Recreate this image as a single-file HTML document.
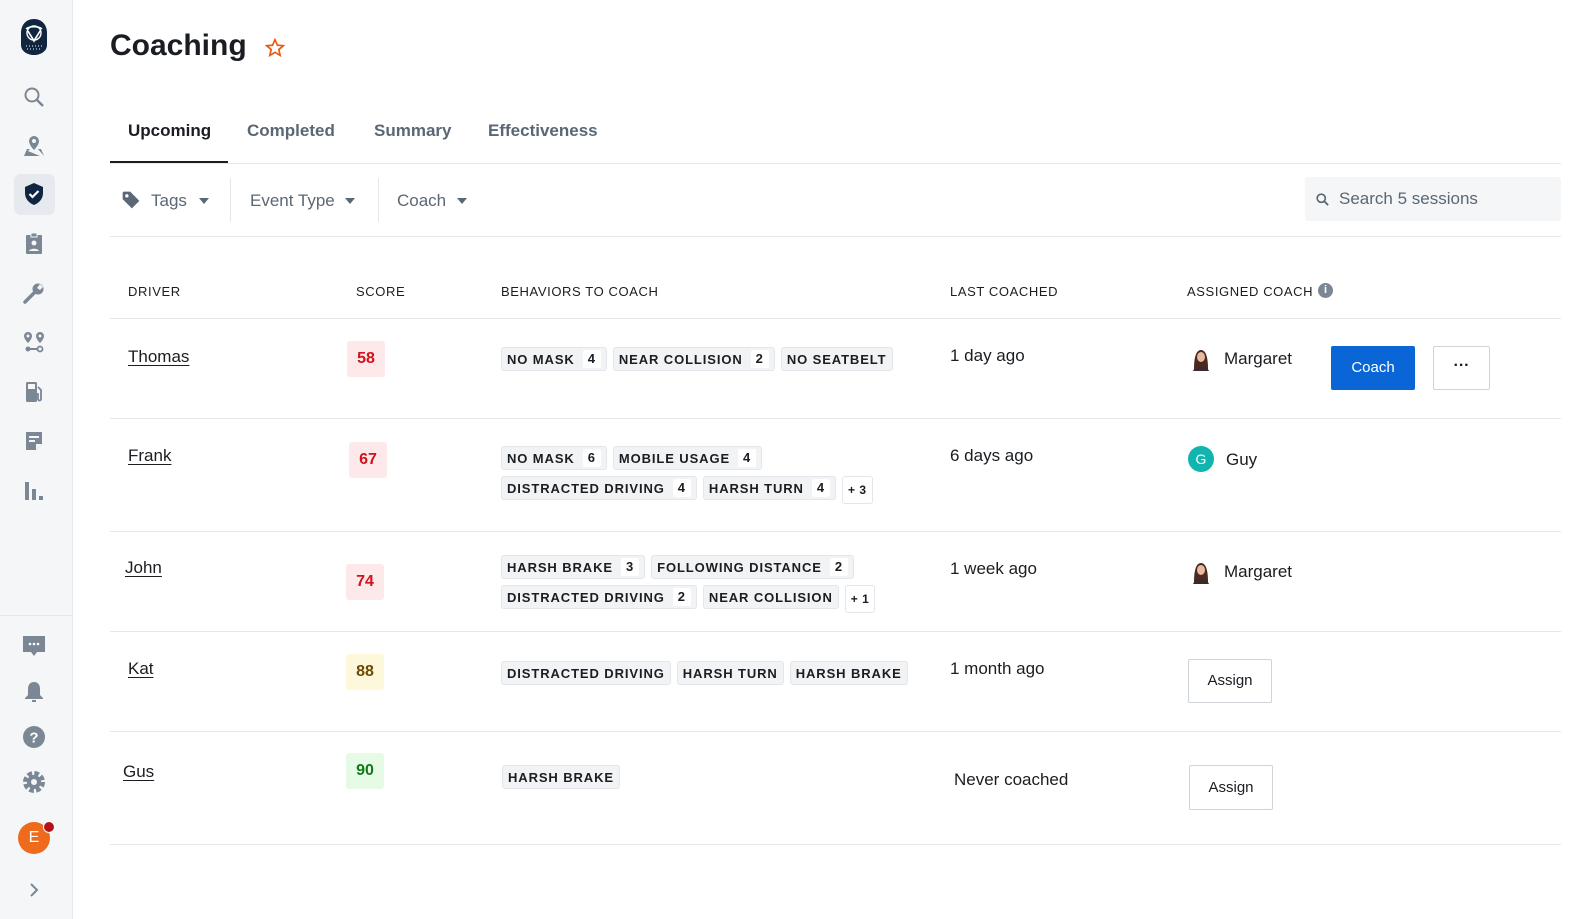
<!DOCTYPE html>
<html><head><meta charset="utf-8"><style>
*{box-sizing:border-box;margin:0;padding:0}
body{width:1596px;height:919px;overflow:hidden;background:#fff;font-family:"Liberation Sans",sans-serif;color:#1a1d21;position:relative}
.sb{position:absolute;left:0;top:0;width:73px;height:919px;background:#f4f6f8;border-right:1px solid #e6e9ed}
.ic{position:absolute;left:22px;width:24px;height:24px}
.a{position:absolute;white-space:nowrap}
.hl{position:absolute;left:110px;width:1451px;height:1px;background:#e4e7eb}
.th{font-size:13px;letter-spacing:.6px;color:#1a1d21}
.dn{font-size:17px;text-decoration:underline;text-underline-offset:3px}
.sc{position:absolute;width:38px;height:36px;border-radius:3px;font-weight:bold;font-size:16px;text-align:center;line-height:36px}
.r{background:#fde8ea;color:#d0121b}.y{background:#fdf7dc;color:#6b4a00}.g{background:#e5fbe5;color:#137a17}
.chips{position:absolute;left:501px}
.cl{display:flex;gap:6px;margin-bottom:6px}
.ch{display:inline-flex;align-items:center;height:24px;padding:0 5px;background:#f1f3f5;border:1px solid #e3e6ea;border-radius:3px;font-size:13px;font-weight:bold;letter-spacing:.9px}
.ch b{display:inline-block;background:#fff;margin-left:8px;padding:0 5px;height:18px;line-height:18px;border-radius:2px}
.pl{background:#fff;height:28px;margin-top:0;font-size:12px;letter-spacing:.5px}
.t{font-size:17px}
.btn{position:absolute;border:1px solid #cfd4da;background:#fff;font-size:15px;text-align:center;border-radius:2px}
</style></head><body>
<div class="sb">
 <svg class="ic" style="left:20px;top:18px;width:28px;height:38px" viewBox="0 0 28 38"><path d="M14 1C6 1 1 7 1 15v12c0 6 6 10 13 10s13-4 13-10V15C27 7 22 1 14 1z" fill="#0f2540"/><path d="M6 11c3-3 13-3 16 0M8 13c2 4 4 6 6 10 2-4 4-6 6-10" stroke="#fff" stroke-width="1.6" fill="none"/><circle cx="14" cy="15" r="7" stroke="#fff" stroke-width="1.4" fill="none"/><path d="M6 28h16M7 31h14" stroke="#fff" stroke-dasharray="1 2"/></svg>
 <svg class="ic" style="top:85px" viewBox="0 0 24 24"><circle cx="10" cy="10" r="6.5" stroke="#7b8794" stroke-width="2" fill="none"/><path d="M15 15l6 6" stroke="#7b8794" stroke-width="2.4"/></svg>
 <svg class="ic" style="top:134px" viewBox="0 0 24 24"><path d="M12 2a5 5 0 0 0-5 5c0 4 5 9 5 9s5-5 5-9a5 5 0 0 0-5-5z" fill="#7b8794"/><circle cx="12" cy="7" r="2" fill="#f4f6f8"/><path d="M2 22l3-7h3l-2 2 12 5zM22 22l-3-7h-3l6 7z" fill="#7b8794"/></svg>
 <div style="position:absolute;left:14px;top:174px;width:41px;height:41px;background:#e6e9ed;border-radius:7px"></div>
 <svg class="ic" style="top:182px" viewBox="0 0 24 24"><path d="M12 1L3 5v6c0 6 4 10 9 12 5-2 9-6 9-12V5z" fill="#0f2540"/><path d="M7.5 12l3 3 6-6" stroke="#fff" stroke-width="2.2" fill="none"/></svg>
 <svg class="ic" style="top:232px" viewBox="0 0 24 24"><rect x="4" y="3" width="16" height="19" rx="1" fill="#7b8794"/><rect x="9" y="1" width="6" height="4" fill="#7b8794" stroke="#f4f6f8"/><circle cx="12" cy="11" r="2.5" fill="#f4f6f8"/><path d="M7 19c1-3 9-3 10 0z" fill="#f4f6f8"/></svg>
 <svg class="ic" style="top:281px" viewBox="0 0 24 24"><path d="M3 21l9-9" stroke="#7b8794" stroke-width="3.5" stroke-linecap="round"/><circle cx="16" cy="8" r="5.5" fill="#7b8794"/><path d="M18 3l-3 4 3 2 3-3z" fill="#f4f6f8"/></svg>
 <svg class="ic" style="top:330px" viewBox="0 0 24 24"><path d="M6 2a4 4 0 0 0-4 4c0 3 4 7 4 7s4-4 4-7a4 4 0 0 0-4-4zM18 2a4 4 0 0 0-4 4c0 3 4 7 4 7s4-4 4-7a4 4 0 0 0-4-4z" fill="#7b8794"/><circle cx="6" cy="6" r="1.5" fill="#f4f6f8"/><circle cx="18" cy="6" r="1.5" fill="#f4f6f8"/><circle cx="6" cy="19" r="2.5" fill="#7b8794"/><circle cx="18" cy="19" r="2.5" stroke="#7b8794" stroke-width="1.8" fill="none"/><path d="M6 19h10" stroke="#7b8794" stroke-width="2"/></svg>
 <svg class="ic" style="top:380px" viewBox="0 0 24 24"><rect x="4" y="2" width="11" height="20" rx="1.5" fill="#7b8794"/><rect x="6" y="4" width="7" height="5" fill="#f4f6f8"/><path d="M16 7l3 3v9a1.5 1.5 0 0 1-3 0v-5h-1" stroke="#7b8794" stroke-width="1.8" fill="none"/></svg>
 <svg class="ic" style="top:429px" viewBox="0 0 24 24"><path d="M4 3h16v12l-6 6H4z" fill="#7b8794"/><path d="M7 8h10M7 12h6" stroke="#f4f6f8" stroke-width="2"/><path d="M14 21v-6h6" fill="#f4f6f8"/></svg>
 <svg class="ic" style="top:479px" viewBox="0 0 24 24"><rect x="3" y="3" width="4" height="18" fill="#7b8794"/><rect x="10" y="10" width="4" height="11" fill="#7b8794"/><rect x="17" y="17" width="4" height="4" fill="#7b8794"/></svg>
 <div style="position:absolute;left:0;top:615px;width:73px;height:1px;background:#e4e7eb"></div>
 <svg class="ic" style="top:634px" viewBox="0 0 24 24"><path d="M1 2h22v16h-8l-3 4-3-4H1z" fill="#7b8794"/><circle cx="8" cy="10" r="1.3" fill="#fff"/><circle cx="12" cy="10" r="1.3" fill="#fff"/><circle cx="16" cy="10" r="1.3" fill="#fff"/></svg>
 <svg class="ic" style="top:680px" viewBox="0 0 24 24"><path d="M12 2c-4 0-6 3-6 7v6l-3 3v1h18v-1l-3-3V9c0-4-2-7-6-7z" fill="#7b8794"/><path d="M10 21h4" stroke="#7b8794" stroke-width="2"/></svg>
 <svg class="ic" style="top:725px" viewBox="0 0 24 24"><circle cx="12" cy="12" r="11" fill="#7b8794"/><text x="12" y="17.5" text-anchor="middle" font-family="Liberation Sans" font-weight="bold" font-size="15" fill="#fff">?</text></svg>
 <svg class="ic" style="top:770px" viewBox="0 0 24 24"><circle cx="12" cy="12" r="8" fill="none" stroke="#7b8794" stroke-width="6" stroke-dasharray="4.2 2.1"/><circle cx="12" cy="12" r="7" fill="#7b8794"/><circle cx="12" cy="12" r="3" fill="#f4f6f8"/></svg>
 <div style="position:absolute;left:18px;top:822px;width:32px;height:32px;border-radius:50%;background:#ee6a1c;color:#fff;font-size:16px;text-align:center;line-height:32px">E</div>
 <div style="position:absolute;left:43px;top:821px;width:12px;height:12px;border-radius:50%;background:#b5121b;border:1.5px solid #fff"></div>
 <svg class="ic" style="top:880px;left:24px;width:20px;height:20px" viewBox="0 0 20 20"><path d="M7 4l6 6-6 6" stroke="#7b8794" stroke-width="2" fill="none"/></svg>
</div>

<div class="a" style="left:110px;top:29px;font-size:30px;font-weight:bold">Coaching</div>
<svg class="a" style="left:265px;top:38px" width="20" height="20" viewBox="0 0 24 24"><path d="M12 2l2.9 6.6 7.1.6-5.4 4.7 1.6 7-6.2-3.7-6.2 3.7 1.6-7L2 9.2l7.1-.6z" fill="none" stroke="#e8590c" stroke-width="2"/></svg>

<div class="a" style="left:128px;top:121px;font-size:17px;font-weight:bold">Upcoming</div>
<div class="a" style="left:247px;top:121px;font-size:17px;font-weight:bold;color:#5b6774">Completed</div>
<div class="a" style="left:374px;top:121px;font-size:17px;font-weight:bold;color:#5b6774">Summary</div>
<div class="a" style="left:488px;top:121px;font-size:17px;font-weight:bold;color:#5b6774">Effectiveness</div>
<div class="hl" style="top:163px"></div>
<div class="a" style="left:110px;top:161px;width:118px;height:2px;background:#1a1d21"></div>

<svg class="a" style="left:121px;top:190px" width="20" height="20" viewBox="0 0 24 24"><path d="M2 3v8l11 11 9-9L11 2H3z" fill="#5b6774"/><circle cx="7" cy="7" r="2" fill="#fff"/></svg>
<div class="a" style="left:151px;top:191px;font-size:17px;color:#5b6774">Tags</div>
<div class="a" style="left:199px;top:198px;border:5px solid transparent;border-top:6px solid #5b6774"></div>
<div class="a" style="left:230px;top:178px;width:1px;height:44px;background:#e4e7eb"></div>
<div class="a" style="left:250px;top:191px;font-size:17px;color:#5b6774">Event Type</div>
<div class="a" style="left:345px;top:198px;border:5px solid transparent;border-top:6px solid #5b6774"></div>
<div class="a" style="left:378px;top:178px;width:1px;height:44px;background:#e4e7eb"></div>
<div class="a" style="left:397px;top:191px;font-size:17px;color:#5b6774">Coach</div>
<div class="a" style="left:457px;top:198px;border:5px solid transparent;border-top:6px solid #5b6774"></div>
<div class="a" style="left:1305px;top:177px;width:256px;height:44px;background:#f4f6f8;border-radius:3px"></div>
<svg class="a" style="left:1315px;top:192px" width="15" height="15" viewBox="0 0 24 24"><circle cx="10" cy="10" r="6.5" stroke="#5b6774" stroke-width="2.6" fill="none"/><path d="M15 15l6 6" stroke="#5b6774" stroke-width="3"/></svg>
<div class="a" style="left:1339px;top:189px;font-size:17px;color:#5b6774">Search 5 sessions</div>
<div class="hl" style="top:236px"></div>

<div class="a th" style="left:128px;top:284px">DRIVER</div>
<div class="a th" style="left:356px;top:284px">SCORE</div>
<div class="a th" style="left:501px;top:284px">BEHAVIORS TO COACH</div>
<div class="a th" style="left:950px;top:284px">LAST COACHED</div>
<div class="a th" style="left:1187px;top:284px">ASSIGNED COACH</div>
<div class="a" style="left:1318px;top:283px;width:15px;height:15px;border-radius:50%;background:#7b8794;color:#fff;font-size:11px;font-weight:bold;text-align:center;line-height:15px">i</div>
<div class="hl" style="top:318px"></div>

<!-- row1 -->
<div class="a dn" style="left:128px;top:347px">Thomas</div>
<div class="sc r" style="left:347px;top:341px">58</div>
<div class="chips" style="top:347px"><div class="cl"><span class="ch">NO MASK<b>4</b></span><span class="ch">NEAR COLLISION<b>2</b></span><span class="ch">NO SEATBELT</span></div></div>
<div class="a t" style="left:950px;top:346px">1 day ago</div>
<svg class="a" style="left:1188px;top:345px" width="26" height="26" viewBox="0 0 26 26"><circle cx="13" cy="13" r="13" fill="#fff"/><path d="M6 24c0-8 1-19 7-19s7 11 7 19z" fill="#4a2a20"/><ellipse cx="13" cy="12" rx="4" ry="5" fill="#e9b9a0"/><path d="M5 26c2-6 14-6 16 0z" fill="#3b2a2a"/></svg>
<div class="a t" style="left:1224px;top:349px">Margaret</div>
<div class="a" style="left:1331px;top:346px;width:84px;height:44px;background:#0a66d6;border-radius:2px;color:#fff;font-size:15px;text-align:center;line-height:44px">Coach</div>
<div class="btn" style="left:1433px;top:346px;width:57px;height:44px;line-height:38px;font-weight:bold;font-size:16px">···</div>
<div class="hl" style="top:418px"></div>

<!-- row2 -->
<div class="a dn" style="left:128px;top:446px">Frank</div>
<div class="sc r" style="left:349px;top:442px">67</div>
<div class="chips" style="top:446px"><div class="cl"><span class="ch">NO MASK<b>6</b></span><span class="ch">MOBILE USAGE<b>4</b></span></div><div class="cl" style="align-items:flex-start"><span class="ch">DISTRACTED DRIVING<b>4</b></span><span class="ch">HARSH TURN<b>4</b></span><span class="ch pl">+ 3</span></div></div>
<div class="a t" style="left:950px;top:446px">6 days ago</div>
<div class="a" style="left:1188px;top:446px;width:26px;height:26px;border-radius:50%;background:#0fb5ae;color:#fff;font-size:14px;text-align:center;line-height:26px">G</div>
<div class="a t" style="left:1226px;top:450px">Guy</div>
<div class="hl" style="top:531px"></div>

<!-- row3 -->
<div class="a dn" style="left:125px;top:558px">John</div>
<div class="sc r" style="left:346px;top:564px">74</div>
<div class="chips" style="top:555px"><div class="cl"><span class="ch">HARSH BRAKE<b>3</b></span><span class="ch">FOLLOWING DISTANCE<b>2</b></span></div><div class="cl" style="align-items:flex-start"><span class="ch">DISTRACTED DRIVING<b>2</b></span><span class="ch">NEAR COLLISION</span><span class="ch pl">+ 1</span></div></div>
<div class="a t" style="left:950px;top:559px">1 week ago</div>
<svg class="a" style="left:1188px;top:558px" width="26" height="26" viewBox="0 0 26 26"><circle cx="13" cy="13" r="13" fill="#fff"/><path d="M6 24c0-8 1-19 7-19s7 11 7 19z" fill="#4a2a20"/><ellipse cx="13" cy="12" rx="4" ry="5" fill="#e9b9a0"/><path d="M5 26c2-6 14-6 16 0z" fill="#3b2a2a"/></svg>
<div class="a t" style="left:1224px;top:562px">Margaret</div>
<div class="hl" style="top:631px"></div>

<!-- row4 -->
<div class="a dn" style="left:128px;top:659px">Kat</div>
<div class="sc y" style="left:346px;top:654px">88</div>
<div class="chips" style="top:661px"><div class="cl"><span class="ch">DISTRACTED DRIVING</span><span class="ch">HARSH TURN</span><span class="ch">HARSH BRAKE</span></div></div>
<div class="a t" style="left:950px;top:659px">1 month ago</div>
<div class="btn" style="left:1188px;top:659px;width:84px;height:44px;line-height:42px">Assign</div>
<div class="hl" style="top:731px"></div>

<!-- row5 -->
<div class="a dn" style="left:123px;top:762px">Gus</div>
<div class="sc g" style="left:346px;top:753px">90</div>
<div class="chips" style="top:765px;left:502px"><div class="cl"><span class="ch">HARSH BRAKE</span></div></div>
<div class="a t" style="left:954px;top:770px">Never coached</div>
<div class="btn" style="left:1189px;top:765px;width:84px;height:45px;line-height:43px">Assign</div>
<div class="hl" style="top:844px"></div>
</body></html>
